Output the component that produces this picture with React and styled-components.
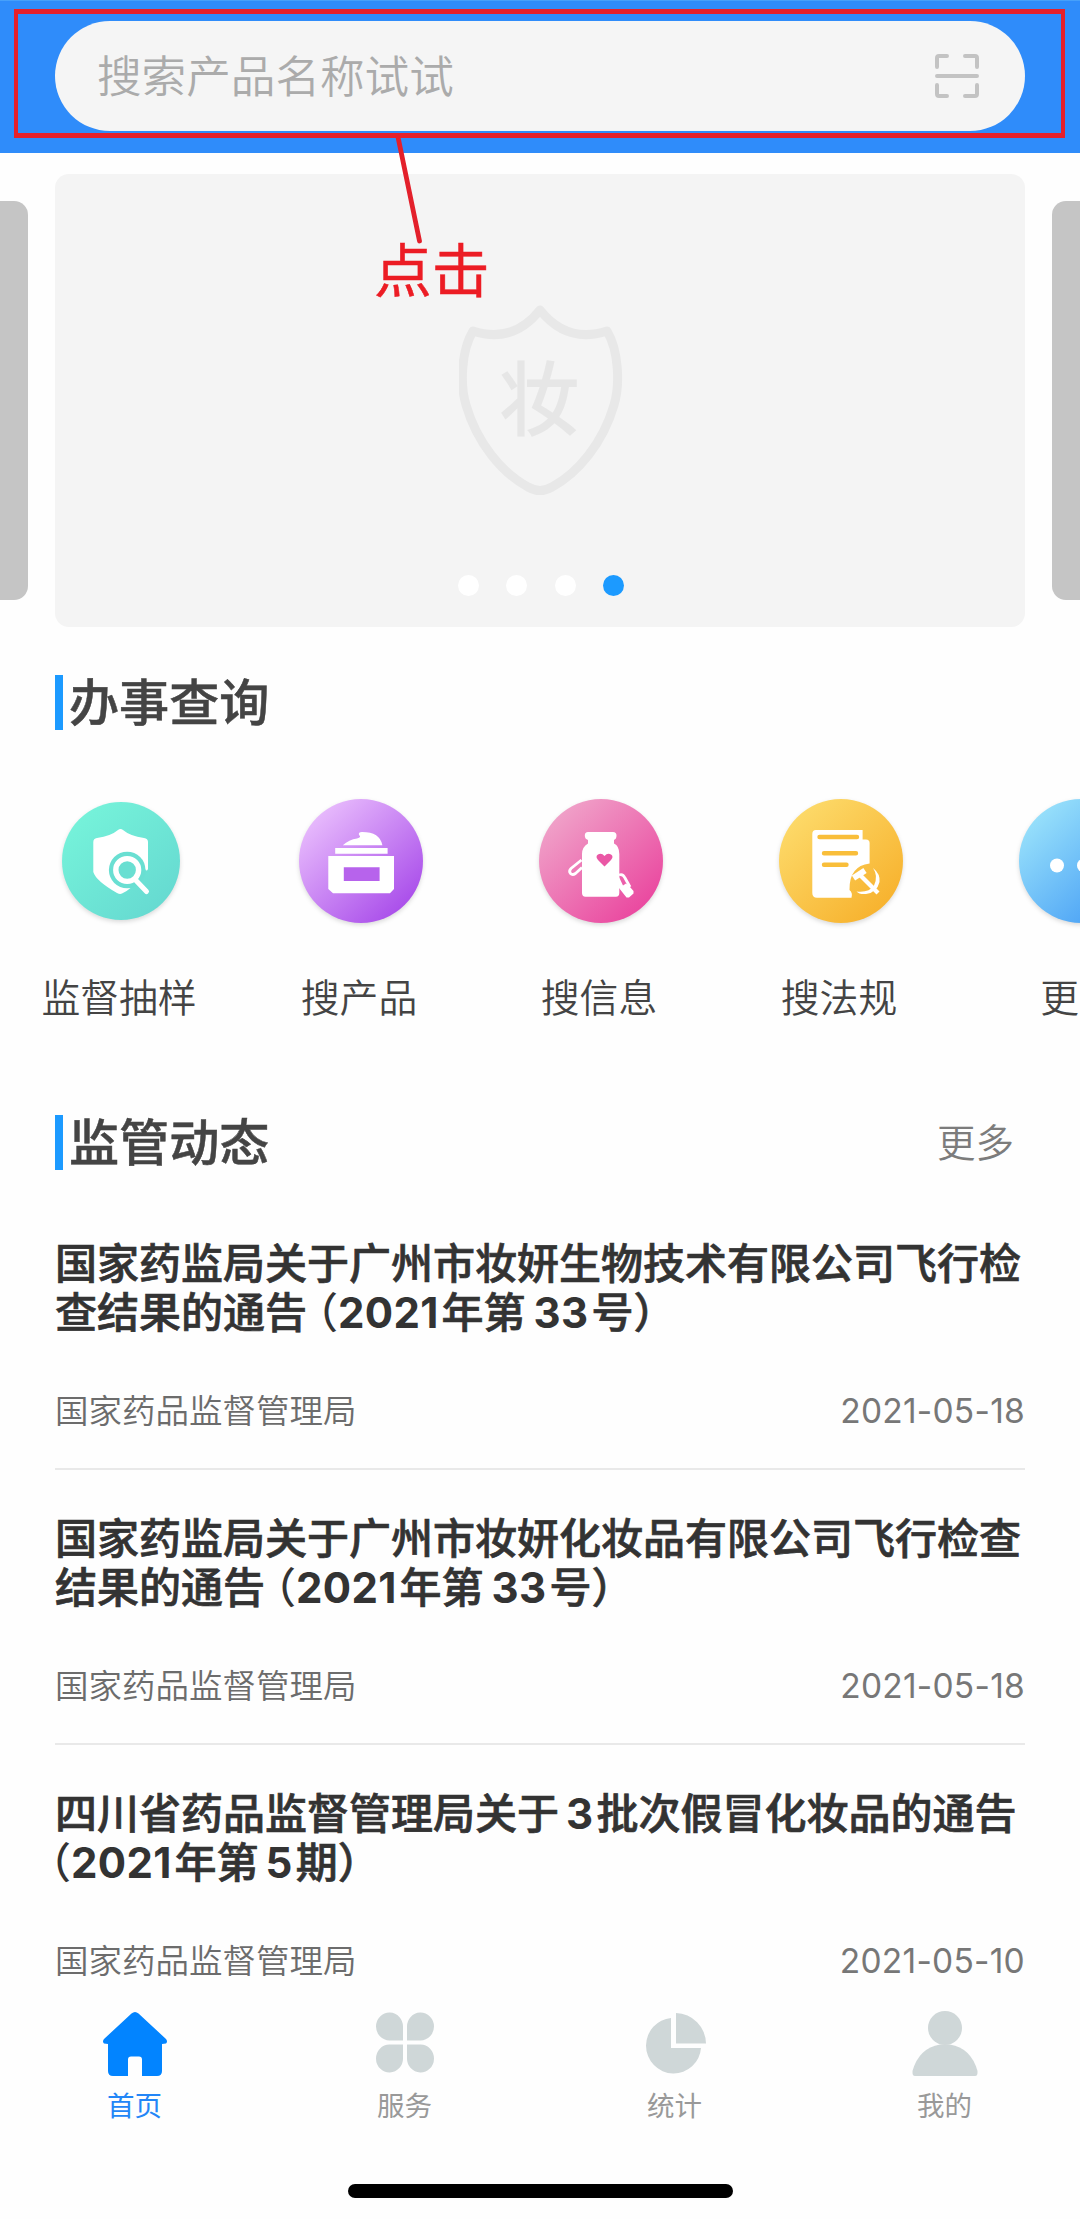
import React from 'react'
import styled, { createGlobalStyle } from 'styled-components'


const GlobalStyle = createGlobalStyle`
* { box-sizing: border-box; }
body {
  margin: 0;
  background: #fefefe;
  font-family: Inter, "Noto Sans CJK SC", sans-serif;
}
`

const Page = styled.div`
position: relative;
display: flex;
flex-direction: column;
width: 1080px;
height: 2219px;
overflow: hidden;
background: #fefefe;
`

const Header = styled.header`
flex: none;
height: 153px;
padding: 20px 55px 0;
border-top: 1px solid #46a0fa;
background: #2f8cfa;
`
const SearchBox = styled.div`
display: flex;
align-items: center;
justify-content: space-between;
height: 110px;
padding: 0 45px 0 42px;
border-radius: 55px;
background: #f5f5f5;
`
const Placeholder = styled.span`
padding-top: 2px;
font-size: 44.6px;
line-height: 60px;
font-weight: 350;
color: #ababab;
`

const Carousel = styled.section`
flex: none;
display: flex;
justify-content: space-between;
align-items: center;
height: 453px;
margin-top: 21px;
`
const SideSlide = styled.div`
width: 28px;
height: 399px;
margin-bottom: 1px;
background: #c5c5c5;
border-radius: ${props => props.$right ? '14px 0 0 14px' : '0 14px 14px 0'};
`
const Slide = styled.div`
display: flex;
flex-direction: column;
align-items: center;
justify-content: space-between;
width: 970px;
height: 453px;
padding: 129px 0 31px 2px;
border-radius: 14px;
background: #f4f4f4;
`
const Dots = styled.div`
display: flex;
gap: 27.5px;
`
const Dot = styled.i`
width: 21px;
height: 21px;
border-radius: 50%;
background: ${props => props.$active ? '#1c9aff' : '#ffffff'};
`

const SectionHead = styled.div`
flex: none;
display: flex;
align-items: center;
height: 55px;
margin: ${props => props.$top} 55px 0;
`
const Bar = styled.i`
width: 8px;
height: 55px;
background: #1c9aff;
`
const H2 = styled.h2`
margin: 0 0 0 6px;
font-size: 50.1px;
line-height: 55px;
font-weight: 500;
-webkit-text-stroke: .5px #444444;
color: #444444;
`
const More = styled.span`
margin-left: auto;
padding: 0 11px 5px 0;
font-size: 38.5px;
font-weight: 350;
color: #7c7c7c;
`

const Shortcuts = styled.nav`
flex: none;
display: flex;
height: 385px;
overflow: hidden;
`
const Shortcut = styled.div`
flex: none;
display: flex;
flex-direction: column;
align-items: center;
width: 240px;
padding-top: 66px;
`
const IconSlot = styled.div`
display: flex;
align-items: center;
justify-content: center;
height: 130px;
padding-left: 1px;
svg { overflow: visible; filter: drop-shadow(0 2px 2px rgba(0, 0, 0, .14)); }
`
const ShortcutName = styled.span`
margin: 46px 2px 0 0;
font-size: 38.8px;
line-height: 52px;
font-weight: 350;
color: #444444;
`

const NewsList = styled.ul`
flex: 1;
min-height: 0;
overflow: hidden;
margin: 0;
padding: 25px 55px 0;
list-style: none;
`
const NewsItem = styled.li`
height: 275px;
padding-top: 45px;
border-bottom: 2px solid #e9e9e9;
`
const NewsTitle = styled.h3`
margin: 0;
font-size: 42px;
line-height: 48.5px;
font-weight: 500;
-webkit-text-stroke: .7px #333333;
color: #333333;
white-space: nowrap;
`
const Paren = styled.span` //halt keeps the full width bracket half as wide
margin-left: ${props => props.$shift}px;
font-feature-settings: "halt";
-webkit-text-stroke: 0;
`
const Num = styled.span`
margin: 0 3px 0 ${props => props.$before || 0}px;
font-weight: 650;
letter-spacing: .3px;
-webkit-text-stroke: 0;
`
const Meta = styled.div`
display: flex;
justify-content: space-between;
margin-top: 51px;
font-size: 33.5px;
line-height: 46px;
font-weight: 350;
color: #6c6c6c;
`
const DateText = styled.time`
font-weight: 400;
font-feature-settings: "calt" 0;
letter-spacing: .25px;
color: #777777;
`

const TabBar = styled.footer`
flex: none;
display: flex;
height: 187px;
padding-top: 14px;
background: #fefefe;
`
const Tab = styled.div`
flex: 1;
display: flex;
flex-direction: column;
align-items: center;
padding-right: 1px;
font-size: 27.5px;
line-height: 36px;
color: ${props => props.$active ? '#2386f7' : '#999999'};
svg { margin-bottom: 11px; }
`
const HomeIndicator = styled.div`
flex: none;
width: 385px;
height: 14px;
margin: 0 0 21px 348px;
border-radius: 7px;
background: #000000;
`

// red marks drawn over the page
const MarkBox = styled.div`
position: absolute;
left: 14px;
top: 9px;
width: 1051px;
height: 129px;
border: solid #e6202a;
border-width: 5px 4px;
`
const MarkLine = styled.svg`
position: absolute;
left: 390px;
top: 134px;
`
const MarkText = styled.span`
position: absolute;
left: 374px;
top: 236px;
font-size: 57.8px;
line-height: 70px;
-webkit-text-stroke: .5px #ec1c24;
color: #ec1c24;
`

const ScanIcon = () => (
  <svg width="46" height="46" viewBox="0 0 46 46" fill="none" stroke="#c3c3c3" strokeWidth="4" strokeLinecap="round" strokeLinejoin="round">
    <path d="M3 14V5q0-2 2-2h8M31 3h10q2 0 2 2v9M3 32v9q0 2 2 2h8M31 43h10q2 0 2-2v-9M3 23h40" />
  </svg>
)

const ShieldLogo = () => (
  <svg width="164" height="194" viewBox="0 0 164 194">
    <path d="M81 7Q54 41 14 28C2 48 1 82 7 102C18 140 43 170 69 184Q81 191 93 184C119 170 144 140 155 102C161 82 160 48 148 28Q108 41 81 7Z" fill="none" stroke="#e8e8e8" strokeWidth="9" strokeLinejoin="round" />
    <text x="80" y="126" textAnchor="middle" fontSize="81" fontWeight="500" fill="#e6e6e6" fontFamily="Noto Sans CJK SC, sans-serif">妆</text>
  </svg>
)

const Disc = ({ id, from, to, size = 124, children }) => (
  <svg width={size} height={size} viewBox={`0 0 ${size} ${size}`}>
    <defs>
      <linearGradient id={id} x1="0.1" y1="0.1" x2="0.85" y2="0.9">
        <stop offset="0" stopColor={from} />
        <stop offset="1" stopColor={to} />
      </linearGradient>
    </defs>
    <circle cx={size / 2} cy={size / 2} r={size / 2} fill={`url(#${id})`} />
    {children}
  </svg>
)

const SampleIcon = () => (
  <Disc id="g1" from="#76f3da" to="#66dad1" size={118}>
    <path fill="#fff" d="M56 28Q58.500 26 61 28Q68 34 82 36Q86 36.500 86 40V67Q84.500 70 83 67L60 66L62 86H68.500Q64 90 60 91.500Q58 92.500 55 91Q34 79 31.300 70V40Q31.300 36.500 35 36Q49 34 56 28Z" />
    <circle cx="65.200" cy="68" r="18.300" fill="#69dfd2" />
    <circle cx="65.200" cy="68" r="11.400" fill="none" stroke="#fff" strokeWidth="5.400" />
    <path d="M74 78.500L84.500 89.500" stroke="#fff" strokeWidth="5" strokeLinecap="round" />
  </Disc>
)

const ProductIcon = () => (
  <Disc id="g2" from="#eabffd" to="#a94dea">
    <path fill="#fff" d="M43.800 46.300Q50 40.500 58 39.500Q63 38 60 36Q59 33 63 33Q81 33 83.400 46.300ZM36.200 49H88.600V54.700H36.200ZM29.300 57H95V90L91 94.300H34L29.300 90Z" />
    <path fill="#b763ec" d="M44.800 68.300H80.600V82H44.800Z" />
  </Disc>
)

const InfoIcon = () => (
  <Disc id="g3" from="#f0a5ca" to="#ea479f">
    <path fill="#fff" d="M49 33H74Q77.500 33 77.500 36.500Q77.500 40 75 41V44.500Q80.300 47 80.300 55V94Q80.300 97.700 77 97.700H46.500Q43 97.700 43 94V55Q43 48 49 44.500V41Q45.800 40 45.800 36.500Q45.800 33 49 33Z" />
    <path fill="#ea57a5" d="M65.500 67.500L59 61Q56 57.500 59 55.500Q62.500 53.500 65.500 57Q68.500 53.500 72 55.500Q75 57.500 72 61Z" />
    <path fill="none" stroke="#fff" strokeWidth="2.800" d="M42.500 61L32 69.500Q29.500 72 31.500 74.500Q33.500 76.500 36.500 74.500L43 68.500M80 76Q84 74.500 86 79L91 88" />
    <path fill="#fff" d="M80 78L84 86.500L87 84.500L91 88L94.500 92V94.500L90 98.500H87.500L80 89Z" />
  </Disc>
)

const LawIcon = () => (
  <Disc id="g4" from="#fddb6b" to="#f7b22e">
    <path fill="#fff" d="M37 31H83.600V40.500H87Q90.600 40.500 90.600 44V64.500Q70 67 70.500 91Q74 94 72.500 98.700H38Q33.300 98.700 33.300 94V35Q33.300 31 37 31Z" />
    <path stroke="#f9be3a" strokeWidth="4.400" strokeLinecap="round" d="M40.500 38H78M45 54.300H77M45 65.700H67.500" />
    <path fill="none" stroke="#fff" strokeWidth="6" d="M74.500 79L86 71.500" />
    <path fill="none" stroke="#fff" strokeWidth="4.200" d="M80.500 75.500L99 94" />
    <path fill="#fff" d="M94 69Q101.500 75 100.500 83Q98 93.500 87 95Q80 95.500 77.500 92.500Q90 94 95 86.500Q99.500 77 94 69Z" />
  </Disc>
)

const MoreIcon = () => (
  <Disc id="g5" from="#9be3fb" to="#459df5">
    <circle cx="38" cy="66.500" r="7" fill="#fff" />
    <circle cx="65" cy="66.500" r="7" fill="#fff" />
    <circle cx="92" cy="66.500" r="7" fill="#fff" />
  </Disc>
)

const HomeIcon = () => (
  <svg width="66" height="66" viewBox="0 0 66 66">
    <path fill="#0284ff" d="M29.500 2.500Q33 -.5 36.500 2.500L64 28Q66 30.500 64 32.500L60 33V60Q60 65 55 65H40V48.500Q40 45.500 37 45.500H29Q26 45.500 26 48.500V65H11Q6 65 6 60V33L2 32.500Q0 30.500 2 28Z" />
  </svg>
)
const ServiceIcon = () => (
  <svg width="66" height="66" viewBox="0 0 66 66" fill="#cfd7d8">
    <path d="M31 29.500V16A13.500 14 0 1 0 17.500 29.500ZM35 29.500V16A13.500 14 0 1 1 48.500 29.500ZM31 33.500V47A13.500 14 0 1 1 17.500 33.500ZM35 33.500V47A13.500 14 0 1 0 48.500 33.500Z" />
  </svg>
)
const StatsIcon = () => (
  <svg width="66" height="66" viewBox="0 0 66 66" fill="#cfd7d8">
    <path d="M29 7V37H59A27.500 27.500 0 0 1 31 62.500A27.500 28 0 0 1 4 34.500A27.500 28 0 0 1 29 7ZM34 2A31 31 0 0 1 64 32.500H34Z" />
  </svg>
)
const MineIcon = () => (
  <svg width="66" height="66" viewBox="0 0 66 66" fill="#cfd7d8">
    <circle cx="33" cy="17" r="17" />
    <path d="M28 33.500H38Q59 37 65.500 60Q66 65 63 65H3Q0 65 .5 60Q7 37 28 33.500Z" />
  </svg>
)

const shortcuts = [
  { name: '监督抽样', icon: <SampleIcon /> },
  { name: '搜产品', icon: <ProductIcon /> },
  { name: '搜信息', icon: <InfoIcon /> },
  { name: '搜法规', icon: <LawIcon /> },
  { name: '更多', icon: <MoreIcon /> },
]

const news = [
  {
    title: <>国家药监局关于广州市妆妍生物技术有限公司飞行检<br />查结果的通告<Paren $shift={10}>（</Paren><Num>2021</Num>年第<Num $before={8}>33</Num>号）</>,
    date: '2021-05-18',
  },
  {
    title: <>国家药监局关于广州市妆妍化妆品有限公司飞行检查<br />结果的通告<Paren $shift={10}>（</Paren><Num>2021</Num>年第<Num $before={8}>33</Num>号）</>,
    date: '2021-05-18',
  },
  {
    title: <>四川省药品监督管理局关于<Num $before={7}>3</Num>批次假冒化妆品的通告<br /><Paren $shift={-5}>（</Paren><Num>2021</Num>年第<Num $before={7}>5</Num>期）</>,
    date: '2021-05-10',
  },
]

const tabs = [
  { name: '首页', icon: <HomeIcon />, active: true },
  { name: '服务', icon: <ServiceIcon /> },
  { name: '统计', icon: <StatsIcon /> },
  { name: '我的', icon: <MineIcon /> },
]

export default function App() {
  return (
    <Page>
      <GlobalStyle />
      <Header>
        <SearchBox>
          <Placeholder>搜索产品名称试试</Placeholder>
          <ScanIcon />
        </SearchBox>
      </Header>

      <Carousel>
        <SideSlide />
        <Slide>
          <ShieldLogo />
          <Dots>
            <Dot />
            <Dot />
            <Dot />
            <Dot $active />
          </Dots>
        </Slide>
        <SideSlide $right />
      </Carousel>

      <SectionHead $top="48px">
        <Bar />
        <H2>办事查询</H2>
      </SectionHead>
      <Shortcuts>
        {shortcuts.map(s => (
          <Shortcut key={s.name}>
            <IconSlot>{s.icon}</IconSlot>
            <ShortcutName>{s.name}</ShortcutName>
          </Shortcut>
        ))}
      </Shortcuts>

      <SectionHead $top="0">
        <Bar />
        <H2>监管动态</H2>
        <More>更多</More>
      </SectionHead>
      <NewsList>
        {news.map((n, i) => (
          <NewsItem key={i}>
            <NewsTitle>{n.title}</NewsTitle>
            <Meta>
              <span>国家药品监督管理局</span>
              <DateText>{n.date}</DateText>
            </Meta>
          </NewsItem>
        ))}
      </NewsList>

      <TabBar>
        {tabs.map(t => (
          <Tab key={t.name} $active={t.active}>
            {t.icon}
            <span>{t.name}</span>
          </Tab>
        ))}
      </TabBar>
      <HomeIndicator />

      <MarkBox />
      <MarkLine width="40" height="112" viewBox="0 0 40 112">
        <path d="M8 3L29.500 107" stroke="#e3202b" strokeWidth="4.800" strokeLinecap="round" />
      </MarkLine>
      <MarkText>点击</MarkText>
    </Page>
  )
}
